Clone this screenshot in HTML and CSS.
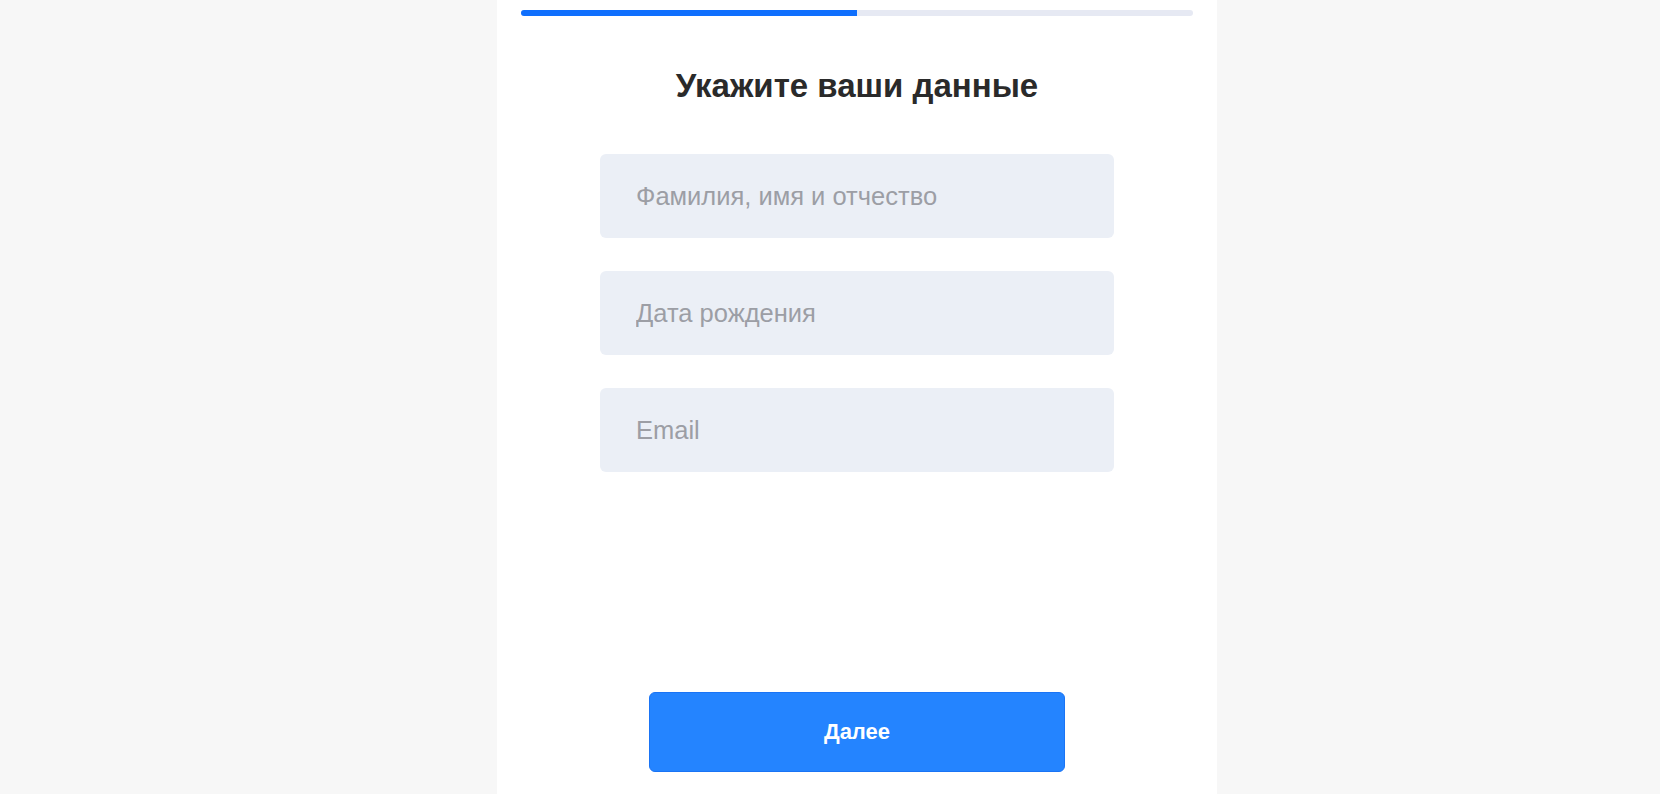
FILE: index.html
```html
<!DOCTYPE html>
<html>
  <head>
    <meta charset="UTF-8">
    <title>Укажите ваши данные</title>
    <link rel="stylesheet" href="styles.css">
  </head>
  <body>

    <div class="page">
      <div class="panel">
        <div class="progress">
          <div class="progress-fill" style="width: 50%"></div>
        </div>

        <h1 class="title">Укажите ваши данные</h1>

        <form class="form">
          <input class="field" type="text" placeholder="Фамилия, имя и отчество">
          <input class="field" type="text" placeholder="Дата рождения">
          <input class="field" type="email" placeholder="Email">
        </form>

        <div class="actions">
          <button class="button" type="button">Далее</button>
        </div>
      </div>
    </div>

  </body>
</html>
```

FILE: styles.css
```css
*, html, body {
  margin: 0;
  padding: 0;
  box-sizing: border-box;
}

body {
  background: #f7f7f7;
  font-family: "Liberation Sans", Arial, sans-serif;
  color: #2b2b2b;
}

.page {
  display: flex;
  justify-content: center;
  padding-left: 54px;
  min-height: 100vh;
}

.panel {
  width: 720px;
  background: #fff;
  padding: 10px 24px 0;
  display: flex;
  flex-direction: column;
  align-items: center;
}

.progress {
  width: 100%;
  height: 6px;
  border-radius: 3px;
  background: #e6e9f3;
  overflow: hidden;
}

.progress-fill {
  height: 100%;
  background: #0f6ffd;
}

.title {
  margin-top: 52px;
  font-size: 33px;
  line-height: 36px;
  font-weight: bold;
  color: #2a2a2a;
}

.form {
  margin-top: 50px;
  width: 514px;
  display: flex;
  flex-direction: column;
  gap: 33px;
}

.field {
  height: 84px;
  border: none;
  border-radius: 6px;
  background: #ebeff6;
  padding: 0 36px;
  font-family: inherit;
  font-size: 25.5px;
  color: #2b2b2b;
  outline: none;
}

.field::placeholder { color: #9c9ea5 }

.actions {
  margin-top: 220px;
}

.button {
  width: 416px;
  height: 80px;
  border: 1px solid #1a74f5;
  border-radius: 6px;
  background: #2484ff;
  color: #fff;
  font-family: inherit;
  font-size: 22px;
  font-weight: bold;
  cursor: pointer;
}
```
